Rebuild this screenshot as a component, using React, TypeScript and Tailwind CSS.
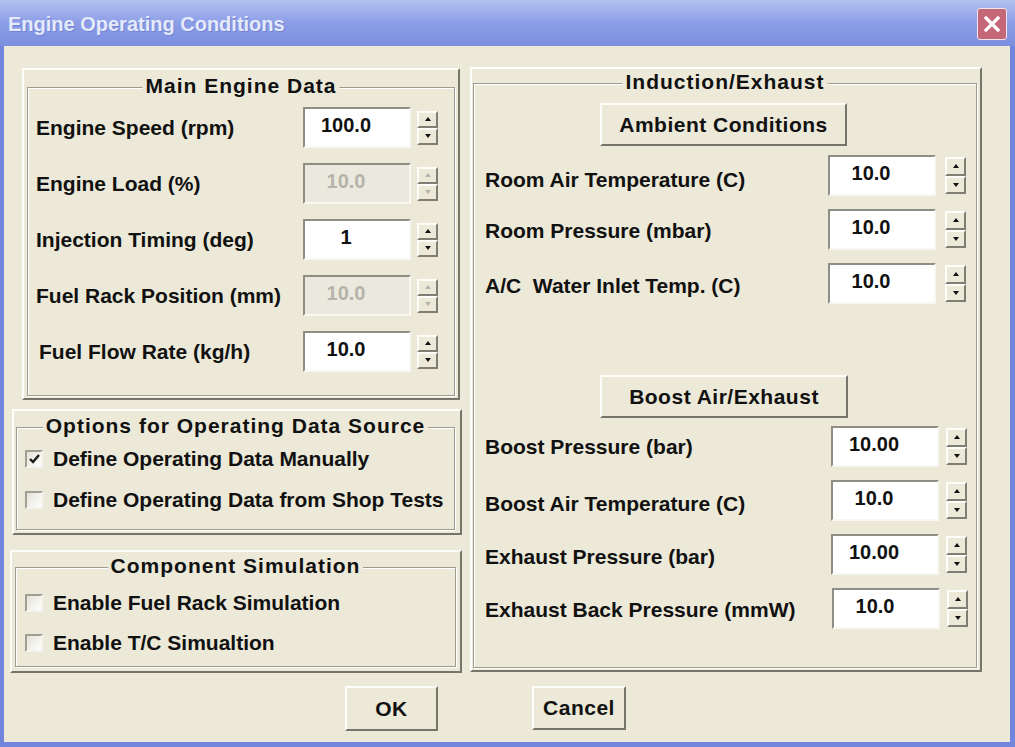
import type { ReactNode } from "react";

// Engine Operating Conditions dialog (classic XP style, scaled up)

function Arrow({ up, disabled }: { up: boolean; disabled?: boolean }) {
  return (
    <svg width="6" height="4" viewBox="0 0 6 4">
      <path d={up ? "M0 4 L3 0 L6 4 Z" : "M0 0 L3 4 L6 0 Z"} fill={disabled ? "#b4b3a8" : "#111"} />
    </svg>
  );
}

function Spinner({ disabled, className }: { disabled?: boolean; className: string }) {
  return (
    <div className={`flex w-[21px] flex-col ${className}`}>
      <div className="flex flex-1 items-center justify-center border-2 border-t-[#fdfdf9] border-l-[#fdfdf9] border-b-[#7f7e74] border-r-[#7f7e74] bg-[#ece9d8]">
        <Arrow up disabled={disabled} />
      </div>
      <div className="flex flex-1 items-center justify-center border-2 border-t-[#fdfdf9] border-l-[#fdfdf9] border-b-[#7f7e74] border-r-[#7f7e74] bg-[#ece9d8]">
        <Arrow up={false} disabled={disabled} />
      </div>
    </div>
  );
}

function Field({ value, disabled }: { value: string; disabled?: boolean }) {
  return (
    <div
      className={`flex h-[41px] w-[108px] shrink-0 items-center justify-center border-2 border-t-[#8f8e85] border-l-[#8f8e85] border-b-[#f8f7f2] border-r-[#f8f7f2] pr-[22px] pb-[6px] text-[20px] font-bold ${
        disabled ? "bg-[#ebe9de] text-[#b5b4a9]" : "bg-white text-[#111]"
      }`}
    >
      {value}
    </div>
  );
}

type RowProps = {
  label: string;
  value: string;
  disabled?: boolean;
  labelClass: string;
  spinClass: string;
};

function Row({ label, value, disabled, labelClass, spinClass }: RowProps) {
  return (
    <div className="flex h-[41px] items-center">
      <div className={`shrink-0 whitespace-pre text-[21px] font-bold text-[#111] ${labelClass}`}>{label}</div>
      <Field value={value} disabled={disabled} />
      <Spinner disabled={disabled} className={spinClass} />
    </div>
  );
}

function GroupBox({ title, className, children }: { title: string; className: string; children: ReactNode }) {
  return (
    <div className={`relative border border-[#9d9c91] shadow-[inset_1px_1px_0_#fff,1px_1px_0_#fff] ${className}`}>
      <div className="absolute left-1/2 -top-[13px] -translate-x-1/2 whitespace-nowrap bg-[#ece9d8] px-[3px] text-[21px] leading-[22px] font-bold tracking-[1px] text-[#111]">
        {title}
      </div>
      {children}
    </div>
  );
}

function CheckRow({ label, checked }: { label: string; checked?: boolean }) {
  return (
    <div className="flex h-[20px] items-center">
      <div className="flex h-[18px] w-[18px] items-center justify-center border-2 border-t-[#a19f95] border-l-[#a19f95] border-b-[#f4f3ee] border-r-[#f4f3ee] bg-linear-to-br from-[#e4e2d6] to-white">
        {checked && (
          <svg width="11" height="10" viewBox="0 0 11 10">
            <path d="M1 5 L4 8 L10 1" fill="none" stroke="#1a1a1a" strokeWidth="2.4" />
          </svg>
        )}
      </div>
      <div className="ml-[10px] whitespace-nowrap text-[21px] leading-[20px] font-bold text-[#111]">{label}</div>
    </div>
  );
}

const RAISED =
  "border-2 border-t-[#fdfdf9] border-l-[#fdfdf9] border-b-[#76756b] border-r-[#76756b]";

function PushButton({ label, className }: { label: string; className: string }) {
  return (
    <div
      className={`flex items-center justify-center bg-[#ece9d8] text-[21px] font-bold tracking-[0.5px] text-[#111] ${RAISED} ${className}`}
    >
      {label}
    </div>
  );
}

export default function App() {
  return (
    <div className="flex h-[747px] w-[1015px] flex-col overflow-hidden bg-[#7185dc] font-['Liberation_Sans',Arial,sans-serif]">
      {/* title bar */}
      <div className="flex h-[46px] shrink-0 items-start justify-between bg-linear-to-b from-[#b3c1f1] via-[#8c9de6] to-[#7b8ee0] pr-[8px]">
        <div className="pt-[12px] pl-[8px] text-[20px] leading-[24px] font-bold text-[#e4eafb] [text-shadow:1px_1px_0_#7384d2]">
          Engine Operating Conditions
        </div>
        <div className="mt-[8px] flex h-[32px] w-[30px] items-center justify-center rounded-[3px] border border-[#f2e6ea] bg-[#c46778]">
          <svg width="18" height="18" viewBox="0 0 18 18">
            <path d="M3 3 L15 15 M15 3 L3 15" stroke="#fff" strokeWidth="3.2" strokeLinecap="square" />
          </svg>
        </div>
      </div>

      {/* client area */}
      <div className="mb-[5px] ml-[4px] mr-[5px] flex flex-1 flex-col bg-[#ece9d8]">
        <div className="flex items-start pt-[21px]">
          {/* left column */}
          <div className="flex w-[458px] shrink-0 flex-col items-start">
            <div className={`ml-[18px] mt-[1px] flex h-[332px] w-[438px] flex-col px-[3px] pt-[17px] pb-[2px] ${RAISED}`}>
              <GroupBox title="Main Engine Data" className="flex flex-1 flex-col gap-[15px] pt-[19px] pl-[8px]">
                <Row label="Engine Speed (rpm)" value="100.0" labelClass="w-[267px]" spinClass="ml-[6px] h-[34px]" />
                <Row label="Engine Load (%)" value="10.0" disabled labelClass="w-[267px]" spinClass="ml-[6px] h-[34px]" />
                <Row label="Injection Timing (deg)" value="1" labelClass="w-[267px]" spinClass="ml-[6px] h-[34px]" />
                <Row label="Fuel Rack Position (mm)" value="10.0" disabled labelClass="w-[267px]" spinClass="ml-[6px] h-[34px]" />
                <Row label="Fuel Flow Rate (kg/h)" value="10.0" labelClass="w-[267px] pl-[3px]" spinClass="ml-[6px] h-[34px]" />
              </GroupBox>
            </div>

            <div className={`ml-[8px] mt-[9px] flex h-[126px] w-[450px] flex-col pl-[2px] pr-[5px] pt-[16px] pb-[3px] ${RAISED}`}>
              <GroupBox title="Options for Operating Data Source" className="flex flex-1 flex-col gap-[21px] pt-[21px] pl-[8px]">
                <CheckRow label="Define Operating Data Manually" checked />
                <CheckRow label="Define Operating Data from Shop Tests" />
              </GroupBox>
            </div>

            <div className={`ml-[6px] mt-[15px] flex h-[123px] w-[452px] flex-col pl-[3px] pr-[4px] pt-[15px] pb-[4px] ${RAISED}`}>
              <GroupBox title="Component Simulation" className="flex flex-1 flex-col gap-[20px] pt-[25px] pl-[9px]">
                <CheckRow label="Enable Fuel Rack Simulation" />
                <CheckRow label="Enable T/C Simualtion" />
              </GroupBox>
            </div>
          </div>

          {/* right column */}
          <div className={`ml-[8px] flex h-[605px] w-[512px] shrink-0 flex-col pl-[1px] pr-[3px] pt-[14px] pb-[2px] ${RAISED}`}>
            <GroupBox title="Induction/Exhaust" className="flex flex-1 flex-col pt-[19px]">
              <PushButton label="Ambient Conditions" className="ml-[126px] h-[43px] w-[247px]" />
              <div className="mt-[9px] flex flex-col gap-[13px] pl-[11px]">
                <Row label="Room Air Temperature (C)" value="10.0" labelClass="w-[343px] pt-[8px]" spinClass="ml-[9px] h-[37px]" />
                <Row label="Room Pressure (mbar)" value="10.0" labelClass="w-[343px] pt-[3px]" spinClass="ml-[9px] h-[37px]" />
                <Row label="A/C  Water Inlet Temp. (C)" value="10.0" labelClass="w-[343px] pt-[4px]" spinClass="ml-[9px] h-[37px]" />
              </div>
              <PushButton label="Boost Air/Exhaust" className="ml-[126px] mt-[71px] h-[43px] w-[248px]" />
              <div className="mt-[8px] flex flex-col gap-[13px] pl-[11px]">
                <Row label="Boost Pressure (bar)" value="10.00" labelClass="w-[346px]" spinClass="ml-[7px] h-[37px]" />
                <Row label="Boost Air Temperature (C)" value="10.0" labelClass="w-[346px] pt-[6px]" spinClass="ml-[7px] h-[37px]" />
                <Row label="Exhaust Pressure (bar)" value="10.00" labelClass="w-[346px] pt-[4px]" spinClass="ml-[7px] h-[37px]" />
                <Row label="Exhaust Back Pressure (mmW)" value="10.0" labelClass="w-[347px] pt-[2px]" spinClass="ml-[7px] h-[37px]" />
              </div>
            </GroupBox>
          </div>
        </div>

        {/* dialog buttons */}
        <div className="mt-[13px] flex pl-[341px]">
          <PushButton label="OK" className="h-[45px] w-[93px]" />
          <PushButton label="Cancel" className="ml-[94px] h-[44px] w-[94px]" />
        </div>
      </div>
    </div>
  );
}
